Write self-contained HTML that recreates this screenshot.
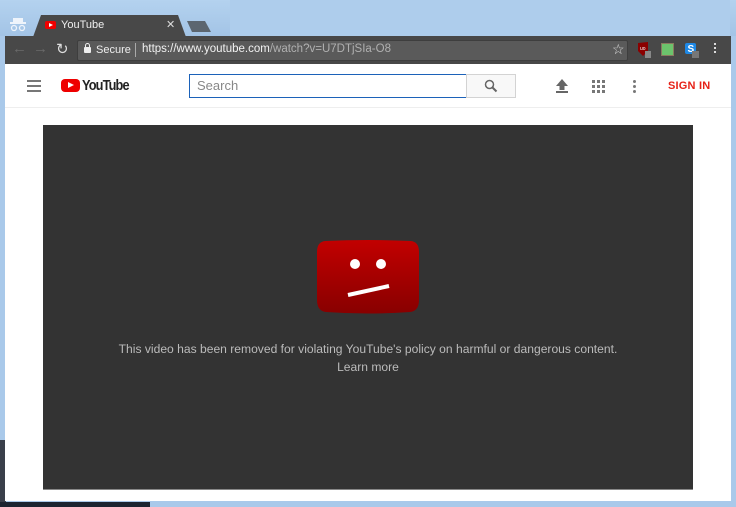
<!DOCTYPE html>
<html><head><meta charset="utf-8"><style>
*{margin:0;padding:0;box-sizing:border-box}
body{width:736px;height:507px;overflow:hidden;background:#a9c9ea;font-family:"Liberation Sans",sans-serif;position:relative}
.abs{position:absolute}
</style></head><body>
<div class="abs" style="left:0;top:0;width:736px;height:36px;background:linear-gradient(#b4d2ef,#a3c4e6)"></div>
<div class="abs" style="left:230px;top:0;width:500px;height:36px;background:#aecdec"></div>
<div class="abs" style="left:0;top:440px;width:6px;height:67px;background:#3a3f4a"></div>
<div class="abs" style="left:0;top:502px;width:150px;height:5px;background:#1c2430"></div>
<!-- incognito icon -->
<svg class="abs" style="left:10px;top:16px" width="16" height="16"><rect x="3" y="2" width="10" height="4" fill="#eef4fb"/><rect x="0" y="6" width="16" height="2" fill="#eef4fb"/><circle cx="4" cy="12" r="2.5" fill="none" stroke="#eef4fb" stroke-width="1.3"/><circle cx="12" cy="12" r="2.5" fill="none" stroke="#eef4fb" stroke-width="1.3"/></svg>
<!-- tab -->
<svg class="abs" style="left:30px;top:14px" width="190" height="24"><path d="M3 23 L11 1 L148 1 L156 23 Z" fill="#484848"/><path d="M157 7 L175 7 L181 18 L162 18 Z" fill="#5c6670"/></svg>
<div class="abs" style="left:45px;top:21px;width:11px;height:8px;background:#e00;border-radius:2px"></div>
<div class="abs" style="left:49px;top:23px;width:0;height:0;border-left:4px solid #fff;border-top:2px solid transparent;border-bottom:2px solid transparent"></div>
<div class="abs" style="left:61px;top:19px;font-size:11px;color:#f0f0f0">YouTube</div>
<div class="abs" style="left:166px;top:18px;font-size:11px;color:#ddd">✕</div>
<!-- toolbar -->
<div class="abs" style="left:5px;top:36px;width:726px;height:28px;background:#484848"></div>
<div class="abs" style="left:12px;top:40px;font-size:15px;color:#6a6a6a">←</div>
<div class="abs" style="left:33px;top:40px;font-size:15px;color:#6a6a6a">→</div>
<div class="abs" style="left:56px;top:40px;font-size:15px;color:#ddd">↻</div>
<div class="abs" style="left:77px;top:40px;width:551px;height:21px;background:#5a5a5a;border-radius:2px;border:1px solid #3e3e3e"></div>
<div class="abs" style="left:84px;top:47px;width:7px;height:6px;background:#eee;border-radius:1px"></div>
<div class="abs" style="left:85px;top:43px;width:5px;height:6px;border:1.3px solid #eee;border-radius:3px 3px 0 0"></div>
<div class="abs" style="left:96px;top:44px;font-size:11px;color:#eee">Secure</div>
<div class="abs" style="left:135px;top:43px;width:1px;height:14px;background:#aaa"></div>
<div class="abs" style="left:142px;top:43px;font-size:11.5px;color:#f2f2f2">https://www.youtube.com<span style="color:#b0b0b0">/watch?v=U7DTjSIa-O8</span></div>
<div class="abs" style="left:612px;top:41px;font-size:14px;color:#ddd">☆</div>
<svg class="abs" style="left:636px;top:41px" width="16" height="18"><path d="M2 2 L12 1 L12 10 L7 15 L2 10 Z" fill="#8b0000"/><text x="4" y="9" font-size="5" fill="#fff" font-family="Liberation Sans">uo</text><rect x="9" y="10" width="6" height="7" fill="#888"/></svg>
<div class="abs" style="left:661px;top:43px;width:13px;height:13px;background:#6cc46c;border:1px solid #8a7a60"></div>
<svg class="abs" style="left:684px;top:41px" width="16" height="18"><rect x="1" y="2" width="11" height="11" rx="2" fill="#1e88e5"/><text x="3.5" y="11" font-size="10" font-weight="bold" fill="#fff" font-family="Liberation Sans">S</text><rect x="8" y="10" width="7" height="7" fill="#777"/></svg>
<div class="abs" style="left:714px;top:43px;width:2px;height:2px;background:#ddd;box-shadow:0 4px #ddd,0 8px #ddd"></div>
<!-- page -->
<div class="abs" style="left:5px;top:64px;width:726px;height:437px;background:#fff"></div>
<div class="abs" style="left:5px;top:107px;width:726px;height:1px;background:#eee"></div>
<div class="abs" style="left:27px;top:80px;width:14px;height:2px;background:#777;box-shadow:0 5px #777,0 10px #777"></div>
<div class="abs" style="left:61px;top:79px;width:19px;height:13px;background:#e00;border-radius:4px"></div>
<div class="abs" style="left:68px;top:82px;width:0;height:0;border-left:6px solid #fff;border-top:3.5px solid transparent;border-bottom:3.5px solid transparent"></div>
<div class="abs" style="left:82px;top:77px;font-size:15px;color:#222;letter-spacing:-1px;font-weight:bold;transform:scaleX(0.85);transform-origin:left">YouTube</div>
<div class="abs" style="left:189px;top:74px;width:278px;height:24px;border:1px solid #1c62b9"></div>
<div class="abs" style="left:197px;top:78px;font-size:13px;color:#888">Search</div>
<div class="abs" style="left:466px;top:74px;width:50px;height:24px;background:#f8f8f8;border:1px solid #d3d3d3"></div>
<svg class="abs" style="left:484px;top:79px" width="14" height="14"><circle cx="5.5" cy="5.5" r="4" fill="none" stroke="#666" stroke-width="1.5"/><path d="M8.5 8.5 L12.5 12.5" stroke="#666" stroke-width="2"/></svg>
<svg class="abs" style="left:555px;top:78px" width="14" height="16"><path d="M7 1 L13 8 L9.5 8 L9.5 12 L4.5 12 L4.5 8 L1 8 Z" fill="#666"/><rect x="1" y="13" width="12" height="2" fill="#666"/></svg>
<svg class="abs" style="left:592px;top:80px" width="13" height="13"><g fill="#777"><rect x="0" y="0" width="3" height="3"/><rect x="5" y="0" width="3" height="3"/><rect x="10" y="0" width="3" height="3"/><rect x="0" y="5" width="3" height="3"/><rect x="5" y="5" width="3" height="3"/><rect x="10" y="5" width="3" height="3"/><rect x="0" y="10" width="3" height="3"/><rect x="5" y="10" width="3" height="3"/><rect x="10" y="10" width="3" height="3"/></g></svg>
<div class="abs" style="left:633px;top:80px;width:3px;height:3px;border-radius:50%;background:#777;box-shadow:0 5px #777,0 10px #777"></div>
<div class="abs" style="left:668px;top:80px;font-size:11px;color:#e62117;font-weight:bold;letter-spacing:0.2px">SIGN IN</div>
<!-- video -->
<div class="abs" style="left:43px;top:125px;width:650px;height:365px;background:#333;border-bottom:1px solid #888"></div>
<svg class="abs" style="left:315px;top:240px" width="106" height="74"><defs><linearGradient id="g" x1="0" y1="0" x2="0" y2="1"><stop offset="0" stop-color="#c20000"/><stop offset="1" stop-color="#880000"/></linearGradient></defs><path d="M10 1 Q53 -1 96 1 Q104 2 104 12 L104 60 Q104 71 95 72 Q53 75 11 72 Q2 71 2 60 L2 12 Q2 2 10 1 Z" fill="url(#g)"/><circle cx="40" cy="24" r="5" fill="#fff"/><circle cx="66" cy="24" r="5" fill="#fff"/><path d="M33 55 L74 46" stroke="#fff" stroke-width="4"/></svg>
<div class="abs" style="left:43px;top:340px;width:650px;text-align:center;font-size:12.1px;color:#bbb;line-height:18px">This video has been removed for violating YouTube's policy on harmful or dangerous content.<br>Learn more</div>
</body></html>
